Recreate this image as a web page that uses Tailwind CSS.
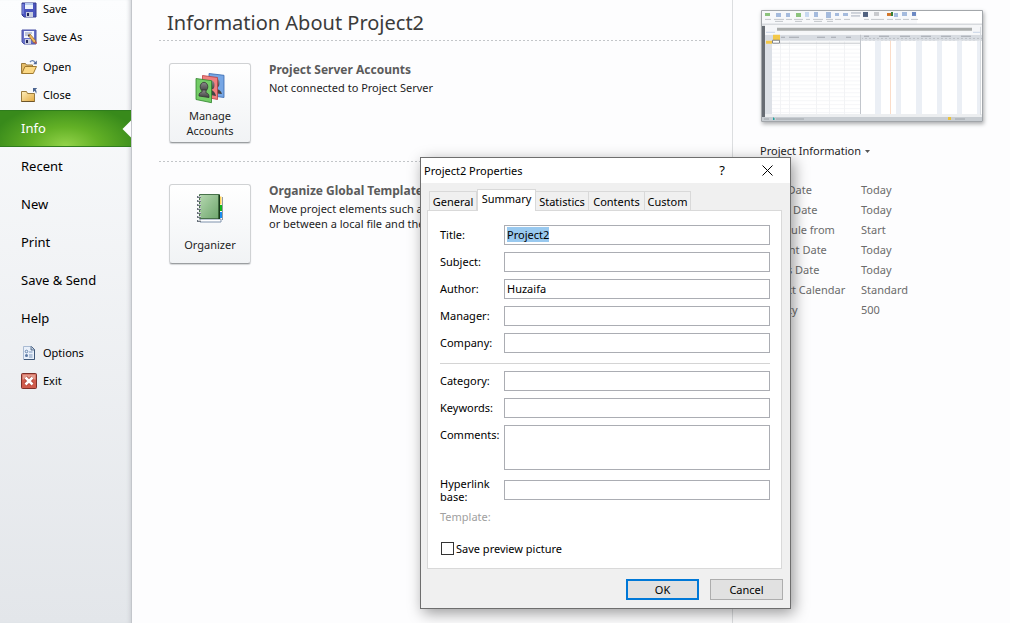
<!DOCTYPE html>
<html lang="en">
<head>
<meta charset="utf-8">
<title>Project2 Properties</title>
<script src="https://cdn.jsdelivr.net/npm/@tailwindcss/browser@4"></script>
</head>
<body class="relative flex min-h-screen overflow-x-hidden bg-[#fdfdfe] font-['Noto_Sans',sans-serif] text-[11px] text-[#1e1e1e]">

<aside class="relative w-[132px] shrink-0 border-r border-[#c3c6cb] bg-linear-to-b from-[#fcfdfe] to-[#e3e6ea] text-black shadow-[inset_-4px_0_4px_-3px_#c9ccd1]">
  <nav class="flex flex-col pt-px">
    <a href="#" class="flex h-[22px] items-center gap-1.5 pb-[5px] pl-[21px]">
      <svg class="size-4" viewBox="0 0 16 16"><path d="M1 1h14v14H3l-2-2z" fill="#4b55bd" stroke="#363d91"/><path d="M4 1h8v6H4z" fill="#eef3fc"/><path d="M4 1h8v2H4z" fill="#b9cdf0"/><path d="M5 10h7v5H5z" fill="#c9cede"/><path d="M6 11h2v3H6z" fill="#25295c"/><path d="M2 2v10" stroke="#8f9aec"/></svg>
      Save</a>
    <a href="#" class="flex h-7 items-center gap-1.5 pl-[21px]">
      <svg class="size-4" viewBox="0 0 16 16"><path d="M1 1h14v14H3l-2-2z" fill="#6771c9" stroke="#4b53a6"/><path d="M3 2h10v7H3z" fill="#f4f7fd"/><path d="M4 4h7M4 6h6" stroke="#8894b8"/><path d="M4 10h6v5H4z" fill="#c9cede"/><path d="M5 11h2v3H5z" fill="#25295c"/><path d="M7 6l2-1 6 7-2 2z" fill="#f0b95a" stroke="#8c6230" stroke-width=".7"/><path d="M7 6l.5 2L9 6z" fill="#333"/><path d="M13 14l2-2 1 2-1 1z" fill="#c65a44"/></svg>
      Save As</a>
    <a href="#" class="mt-0.5 flex h-7 items-center gap-1.5 pl-[21px]">
      <svg class="size-4" viewBox="0 0 16 16"><path d="M.5 14.500V4.500h4l1 1.500h6v3" fill="#e5bd6a" stroke="#9a7a3c"/><path d="M.8 14.500L4 7.500h11.500l-3.200 7z" fill="#fbd884" stroke="#a07a30"/><path d="M9 3c1.500-2 4-1.800 5 .7" fill="none" stroke="#6d86b3" stroke-width="1.300"/><path d="M15.800 1.500v3.700h-3.600z" fill="#4c6796"/></svg>
      Open</a>
    <a href="#" class="flex h-7 items-center gap-1.5 pl-[21px]">
      <svg class="size-4" viewBox="0 0 16 16"><defs><linearGradient id="fold" x2="1" y2="1"><stop stop-color="#fff0bd"/><stop offset="1" stop-color="#e3a93f"/></linearGradient></defs><path d="M.5 14.500V4.500h5l1 2h7v8z" fill="url(#fold)" stroke="#9a7a3c"/><path d="M.5 14.500h13" stroke="#6e5529"/><path d="M12 1h4l-4 4z" fill="#3f5785"/><path d="M12 1v4l1.300-1.300C14.500 4.500 15 5.500 15 7c1-2 .5-3.800-.6-4.600L16 1z" fill="#4c6590"/></svg>
      Close</a>
    <a href="#" class="relative mt-px flex h-[37px] items-center overflow-hidden border-y border-[#2f7d1d] bg-[radial-gradient(ellipse_75px_42px_at_50%_100%,#93d34a,#63b126_45%,#388a1b)] pl-[21px] text-[13px] text-white">
      Info
      <span class="absolute top-1/2 -right-1.5 size-3 -translate-y-1/2 rotate-45 bg-[#fdfdfe]"></span>
    </a>
    <a href="#" class="mt-px flex h-[38px] items-center pl-[21px] text-[13px]">Recent</a>
    <a href="#" class="flex h-[38px] items-center pl-[21px] text-[13px]">New</a>
    <a href="#" class="flex h-[38px] items-center pl-[21px] text-[13px]">Print</a>
    <a href="#" class="flex h-[38px] items-center pl-[21px] text-[13px]">Save &amp; Send</a>
    <a href="#" class="flex h-[38px] items-center pl-[21px] text-[13px]">Help</a>
    <a href="#" class="mt-px flex h-7 items-center gap-1.5 pl-[21px]">
      <svg class="size-4" viewBox="0 0 16 16"><path d="M2.500 1.500h8l3 3v10h-11z" fill="#e9f0fa" stroke="#a9bbd3"/><path d="M10.500 1.500l3 3v10H3" fill="none" stroke="#3f5878"/><path d="M10 1.500v3.500h3.500" fill="#c0cfe2" stroke="#3f5878" stroke-width=".8"/><circle cx="5.500" cy="6.500" r="1.300" fill="none" stroke="#6785ad"/><circle cx="5.500" cy="10.500" r="1.500" fill="#5c79a4"/><path d="M8 7h3.500M8 10h3.500M8 12h3.500" stroke="#7d97bb"/></svg>
      Options</a>
    <a href="#" class="flex h-7 items-center gap-1.5 pl-[21px]">
      <svg class="size-4" viewBox="0 0 16 16"><rect x=".5" y=".5" width="15" height="15" rx="1" fill="#cf5b4c" stroke="#7d2f28"/><path d="M1.500 1.500h13v5h-13z" fill="#e39a8c"/><path d="M4.500 4.500l7 7m0-7l-7 7" stroke="#a8382c" stroke-width="4"/><path d="M4.500 4.500l7 7m0-7l-7 7" stroke="#fff" stroke-width="2.600"/></svg>
      Exit</a>
  </nav>
</aside>

<main class="min-w-0 flex-1 pl-[27px] pr-[23px]">
  <h1 class="flex h-10 items-center pl-2 pt-1.5 text-xl text-[#3b3b3b]">Information About Project2</h1>
  <div class="h-px bg-[repeating-linear-gradient(90deg,#c3c6c9_0_2px,transparent_2px_4px)]"></div>
  <section class="flex h-[120px] gap-[18px] pl-2.5 pt-[22px]">
    <button class="flex h-20 w-[82px] shrink-0 flex-col items-center rounded-[3px] border border-[#d0d2d4] border-b-[#9b9ea1] bg-linear-to-b from-white to-[#f1f3f5] pt-2 leading-[15px] shadow-[0_1px_1px_#d5d7d9]">
      <svg class="size-8" viewBox="0 0 32 32">
        <defs><linearGradient id="man" x2="0" y2="1"><stop stop-color="#8b8b8b"/><stop offset="1" stop-color="#404040"/></linearGradient></defs>
        <g stroke-width=".8"><path d="M15 1.500l15 1.800v22.200l-15-2z" fill="#77a7e5" stroke="#3767ad"/><ellipse cx="22" cy="11" rx="3.500" ry="4.500" fill="url(#man)"/><path d="M17 21c1-5 9-6 11 1z" fill="#444"/>
        <path d="M8.500 3.500l15 2v22l-15-3z" fill="#f08080" stroke="#b84042"/><ellipse cx="17" cy="13" rx="3.500" ry="4.500" fill="url(#man)"/><path d="M11 22c2-5 9-6 11 2z" fill="#444"/>
        <path d="M2 6.500l15.500 2.200v22L2 27.500z" fill="#74cc67" stroke="#2e842b"/><ellipse cx="10" cy="14.800" rx="3.800" ry="4.500" fill="url(#man)" stroke="#333"/><path d="M8 18h4v3c2 .3 3 1 3 4.500L5 24c0-3 1-3.500 3-4z" fill="url(#man)" stroke="#333"/></g>
      </svg>
      <span class="mt-1">Manage<br>Accounts</span>
    </button>
    <div class="-mt-px leading-[15px]">
      <h2 class="pb-[3px] text-xs/[15px] font-bold text-[#5b5b5b]">Project Server Accounts</h2>
      <p>Not connected to Project Server</p>
    </div>
  </section>
  <div class="h-px bg-[repeating-linear-gradient(90deg,#c3c6c9_0_2px,transparent_2px_4px)]"></div>
  <section class="flex h-[120px] gap-[18px] pl-2.5 pt-[22px]">
    <button class="flex h-20 w-[82px] shrink-0 flex-col items-center rounded-[3px] border border-[#d0d2d4] border-b-[#9b9ea1] bg-linear-to-b from-white to-[#f1f3f5] pt-2 leading-[15px] shadow-[0_1px_1px_#d5d7d9]">
      <svg class="size-8" viewBox="0 0 32 32">
        <defs><linearGradient id="book" x2="1" y2="1"><stop stop-color="#b5d8b0"/><stop offset="1" stop-color="#6da56c"/></linearGradient></defs>
        <path d="M6 26h21v3H6z" fill="#fff" stroke="#7e92ac"/>
        <path d="M25 3.500h2.500v8H25z" fill="#ffd257"/><path d="M25 12h3v6h-3z" fill="#10b51c"/><path d="M25 19h3v6h-3z" fill="#198cf0"/><path d="M28.500 4v23" stroke="#65707a" stroke-width=".7"/>
        <path d="M5.500 1.500h20v24h-20z" fill="url(#book)" stroke="#47714a"/><path d="M25.200 2v24" stroke="#163a18" stroke-width="1.600"/>
        <path d="M3 4h4M3 8h4M3 12h4M3 16h4M3 20h4M3 24h4M3 28h4" stroke="#68717a" stroke-width="1.800"/><path d="M4 3.600h3M4 7.600h3M4 11.600h3M4 15.600h3M4 19.600h3M4 23.600h3M4 27.600h3" stroke="#f1f3f5" stroke-width=".8"/>
      </svg>
      <span class="mt-3">Organizer</span>
    </button>
    <div class="-mt-px min-w-0 whitespace-nowrap leading-[15px]">
      <h2 class="pb-[3px] text-xs/[15px] font-bold text-[#5b5b5b]">Organize Global Template</h2>
      <p>Move project elements such as views<br>or between a local file and the global</p>
    </div>
  </section>
</main>

<aside class="w-[278px] shrink-0 border-l border-[#dcdee0] pl-7 pr-[27px] pt-2.5">
  <svg class="block h-28 w-full shadow-[1px_2px_4px_#a9abad]" viewBox="0 0 222 113" preserveAspectRatio="none">
    <defs>
      <pattern id="rows" width="222" height="4" patternUnits="userSpaceOnUse"><path d="M0 3.500h222" stroke="#f5f6f8"/></pattern>
      <pattern id="ticks" width="4" height="3" patternUnits="userSpaceOnUse"><path d="M0 1.500h2" stroke="#b4b8be"/></pattern>
    </defs>
    <path d="M0 0h222v113H0z" fill="#fff"/>
    <path d="M1 1h155v13H1z" fill="#f7f8fa"/><path d="M1 14.500h220" stroke="#d7dade" stroke-width="2"/>
    <g fill="#a5bbdd"><path d="M15 3h5v4h-5zM25 3h4v4h-4zM53 2h4v5h-4zM65 2h5v6h-5zM74 3h4v3h-4zM82 3h5v3h-5zM141 2h5v4h-5zM133 3h4v4h-4z"/></g>
    <path d="M4 3h5v3H4zM35 3h5v4h-5z" fill="#8cc37d"/><path d="M44 2h4v5h-4z" fill="#c7d8f0"/><path d="M102 2h5v5h-5z" fill="#50617f"/><path d="M90 3h10M90 6h9" stroke="#a5adbb"/><path d="M113 2h5v4h-5z" fill="#c8cace"/><path d="M126 3h5v3h-5z" fill="#d27528"/><path d="M151 2h4v4h-4z" fill="#6b88c3"/><path d="M130 2h2v4h-2z" fill="#377f36"/>
    <path d="M4 9.500h6M13 9.500h10M25 9.500h6M33 9.500h9M45 9.500h4M52 9.500h10M65 9.500h7M74 9.500h6M83 9.500h6M103 9.500h5M110 9.500h13M126 9.500h6M134 9.500h6M142 9.500h6M150 9.500h7M14 11.500h8M34 11.500h7M53 11.500h8M66 11.500h6" stroke="#c3c6cb"/>
    <path d="M0 16h4v94H0z" fill="#676c73"/><path d="M4 16h218v8H4z" fill="#f5f6f8"/><path d="M16 18h195v3H16z" fill="#aaadac"/><path d="M5 22.500h9M212 22.500h8" stroke="#c8d5e6"/>
    <path d="M4 25h218v6H4z" fill="#d8dce2"/><path d="M4 31h7v75H4z" fill="#dce0e6"/>
    <path d="M11 31h88v75H11z" fill="url(#rows)"/><path d="M19.500 31v75M28.500 31v75M55.500 31v75M68.500 31v75M83.500 31v75" stroke="#f2f3f5"/>
    <path d="M12 25h7v6h-7zM5 31h6v3H5z" fill="#f3c849"/><path d="M11.500 30.500h7v3h-7z" fill="#fff" stroke="#808489"/><path d="M19 33.500h80" stroke="#c5c8cb"/>
    <path d="M20 27.500h4M28 27.500h10M56 27.500h8M70 27.500h5M85 27.500h5M103 26.500h5M118 26.500h10M139 26.500h10M160 26.500h10M180 26.500h10M200 26.500h10" stroke="#a2a6ad"/>
    <path d="M101 28h120v3H101z" fill="url(#ticks)"/><path d="M114 31h6v75h-6zM135 31h5v75h-5zM155 31h6v75h-6zM176 31h5v75h-5zM196 31h5v75h-5zM216 31h3v75h-3z" fill="#ebeff5"/><path d="M129.500 31v75" stroke="#fadcc8"/><path d="M99.500 25v82" stroke="#c2c6cc"/>
    <path d="M4 105h218v3H4z" fill="#eceef0"/><path d="M1 108h220v4H1z" fill="#c8cdd2"/><path d="M3 110h5M15 110h28M194 110h10" stroke="#a0a5ac"/><path d="M12 108l2 2-1 1h-1z" fill="#20a59f"/><path d="M187 108h3v3h-3z" fill="#eac13c"/><path d="M219.500 17v89" stroke="#d6dade"/>
    <path d="M.5.5h221v112H.5z" fill="none" stroke="#a1a5a9"/>
  </svg>
  <button class="mt-5 -ml-px flex h-[18px] items-center gap-1">Project Information
    <svg class="h-[3px] w-[5px]" viewBox="0 0 5 3"><path d="M0 0h5L2.500 3z" fill="#555"/></svg></button>
  <dl class="-ml-px mt-5 grid auto-rows-[20px] grid-cols-[101px_1fr] items-center whitespace-nowrap text-[#6b6b6b]">
    <dt>Start Date</dt><dd>Today</dd>
    <dt>Finish Date</dt><dd>Today</dd>
    <dt>Schedule from</dt><dd>Start</dd>
    <dt>Current Date</dt><dd>Today</dd>
    <dt>Status Date</dt><dd>Today</dd>
    <dt>Project Calendar</dt><dd>Standard</dd>
    <dt>Priority</dt><dd>500</dd>
  </dl>
</aside>

<div role="dialog" aria-labelledby="dlg-title" class="absolute left-[420px] top-[157px] w-[371px] border border-[#6e6e6e] bg-[#f0f0f0] pb-2 leading-[13px] text-black shadow-[3px_4px_14px_rgba(0,0,0,0.4)]">
  <header class="flex h-[25px] items-center bg-white pb-px pl-[3px] pr-[17px]">
    <h2 id="dlg-title" class="flex-1">Project2 Properties</h2>
    <button aria-label="Help" class="mr-[34px] w-3 text-[13px]">?</button>
    <button aria-label="Close"><svg class="size-[11px]" viewBox="0 0 11 11"><path d="M.5.5l10 10m0-10l-10 10" stroke="#000"/></svg></button>
  </header>
  <div class="pl-1.5 pr-2 pt-1.5">
    <div role="tablist" class="flex items-end pl-0.5">
      <button role="tab" class="h-[19px] w-12 border border-b-0 border-[#d9d9d9]">General</button>
      <button role="tab" aria-selected="true" class="relative z-10 -mb-px h-[22px] w-[59px] border border-b-0 border-[#d9d9d9] bg-white pb-1">Summary</button>
      <button role="tab" class="h-[19px] w-[53px] border border-b-0 border-l-0 border-[#d9d9d9]">Statistics</button>
      <button role="tab" class="h-[19px] w-14 border border-b-0 border-l-0 border-[#d9d9d9]">Contents</button>
      <button role="tab" class="h-[19px] w-[46px] border border-b-0 border-l-0 border-[#d9d9d9]">Custom</button>
    </div>
    <form id="props" class="border border-[#d9d9d9] bg-white pb-[13px] pl-3 pr-[11px] pt-3.5">
      <div class="grid grid-cols-[64px_1fr] items-center gap-y-[7px] [&>input]:pb-0.5 [&>label]:pb-0.5">
        <label for="f-title">Title:</label><input id="f-title" value="Project2" class="h-5 min-w-0 border border-[#abadb3] px-0.5 outline-none selection:bg-[#99c9ef] selection:text-black">
        <label for="f-subject">Subject:</label><input id="f-subject" class="h-5 min-w-0 border border-[#abadb3] px-0.5">
        <label for="f-author">Author:</label><input id="f-author" value="Huzaifa" class="h-5 min-w-0 border border-[#abadb3] px-0.5">
        <label for="f-manager">Manager:</label><input id="f-manager" class="h-5 min-w-0 border border-[#abadb3] px-0.5">
        <label for="f-company">Company:</label><input id="f-company" class="h-5 min-w-0 border border-[#abadb3] px-0.5">
      </div>
      <hr class="mb-[7px] mt-2.5 border-[#d4d4d4]">
      <div class="grid grid-cols-[64px_1fr] items-center gap-y-[7px] whitespace-nowrap">
        <label for="f-category" class="pb-0.5">Category:</label><input id="f-category" class="h-5 min-w-0 border border-[#abadb3] px-0.5">
        <label for="f-keywords" class="pb-0.5">Keywords:</label><input id="f-keywords" class="h-5 min-w-0 border border-[#abadb3] px-0.5">
        <label for="f-comments" class="self-start pt-[3px]">Comments:</label><textarea id="f-comments" class="h-[45px] min-w-0 resize-none border border-[#abadb3] px-0.5"></textarea>
        <label for="f-base">Hyperlink<br>base:</label><input id="f-base" class="h-5 min-w-0 border border-[#abadb3] px-0.5">
      </div>
      <p class="mt-[7px] text-[#a0a0a0]">Template:</p>
      <label class="mt-[19px] flex items-center gap-0.5"><input type="checkbox" class="ml-px size-[13px] appearance-none border border-[#333] bg-white">Save preview picture</label>
    </form>
  </div>
  <footer class="flex justify-end gap-[11px] pr-[7px] pt-2.5">
    <button class="h-[21px] w-[73px] border-2 border-[#0078d7] bg-[#e1e1e1]">OK</button>
    <button class="h-[21px] w-[73px] border border-[#adadad] bg-[#e1e1e1]">Cancel</button>
  </footer>
</div>
<script>
  const title = document.getElementById('f-title');
  title.focus({ preventScroll: true });
  title.select();
</script>
</body>
</html>
